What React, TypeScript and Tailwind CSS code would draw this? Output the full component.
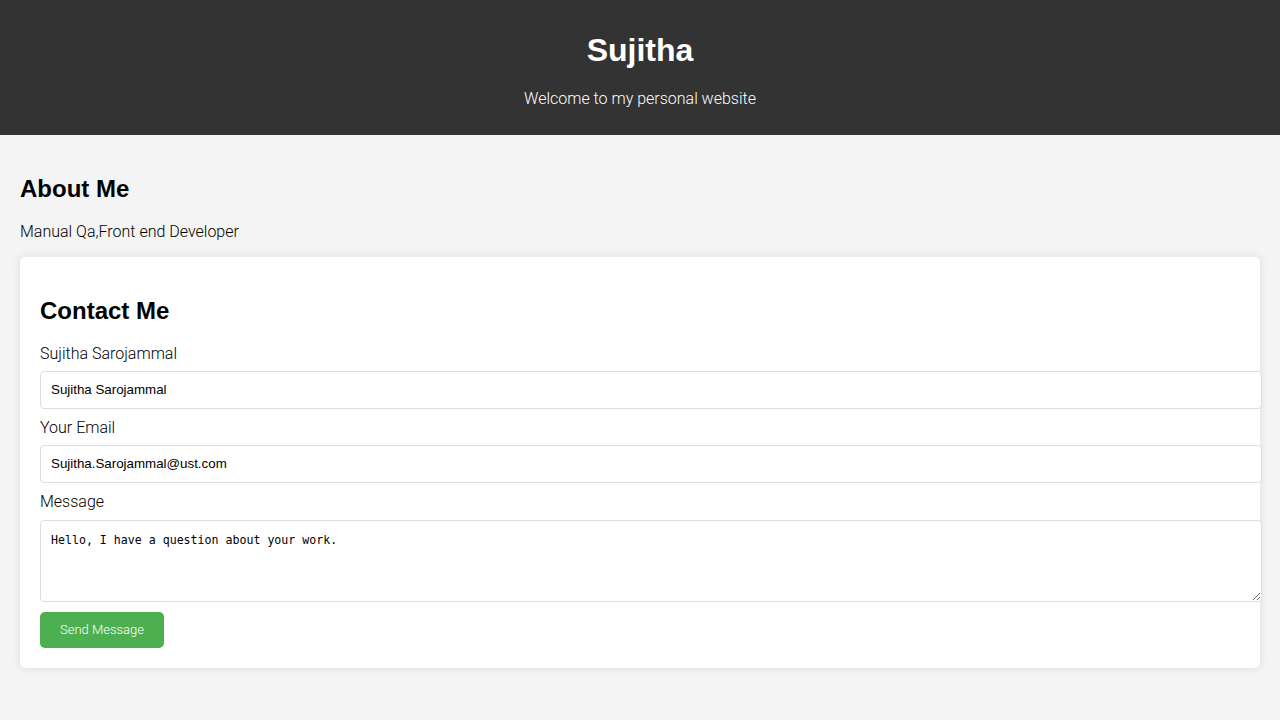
export default function App() {
  return (
    <div className="min-h-[720px] bg-[#f4f4f4] text-black font-['Roboto',Arial,sans-serif] font-light">
      <header className="bg-[#333] text-white text-center pt-[11px] pb-[11px]">
        <h1 className="mt-[21px] text-[32px] leading-[37px] font-bold font-['Liberation_Sans',Arial,sans-serif]">Sujitha</h1>
        <p className="mt-[21px] mb-4 text-base leading-[18px]">Welcome to my personal website</p>
      </header>

      <main className="p-5">
        <section>
          <h2 className="mt-5 text-2xl leading-[28px] font-bold font-['Liberation_Sans',Arial,sans-serif]">About Me</h2>
          <p className="mt-5 mb-4 text-base leading-[18px]">Manual Qa,Front end Developer</p>
        </section>

        <section className="bg-white rounded-[5px] p-5 shadow-[0_0_10px_rgba(0,0,0,0.1)]">
          <h2 className="mt-5 mb-5 text-2xl leading-[28px] font-bold font-['Liberation_Sans',Arial,sans-serif]">Contact Me</h2>
          <form onSubmit={(e) => e.preventDefault()}>
            <label className="block mb-2 text-base leading-[18px]">Sujitha Sarojammal</label>
            <input
              type="text"
              defaultValue="Sujitha Sarojammal"
              className="box-content block w-full mb-[10px] p-[10px] h-4 border border-[#ddd] rounded-[4px] text-[13.33px] leading-4 text-black bg-white font-normal font-['Liberation_Sans',Arial,sans-serif]"
            />
            <label className="block mb-2 text-base leading-[18px]">Your Email</label>
            <input
              type="email"
              defaultValue="Sujitha.Sarojammal@ust.com"
              className="box-content block w-full mb-[10px] p-[10px] h-4 border border-[#ddd] rounded-[4px] text-[13.33px] leading-4 text-black bg-white font-normal font-['Liberation_Sans',Arial,sans-serif]"
            />
            <label className="block mb-[9px] text-base leading-[18px]">Message</label>
            <textarea
              defaultValue="Hello, I have a question about your work."
              className="box-content block w-full mb-[10px] p-[10px] h-[60px] border border-[#ddd] rounded-[4px] text-[11.6px] leading-[18px] text-black bg-white resize font-normal font-['DejaVu_Sans_Mono',monospace]"
            />
            <button
              type="submit"
              className="bg-[#4caf50] text-white rounded-[5px] px-5 py-[10px] text-[13px] leading-4 font-light font-['Roboto',Arial,sans-serif]"
            >
              Send Message
            </button>
          </form>
        </section>
      </main>
    </div>
  );
}
